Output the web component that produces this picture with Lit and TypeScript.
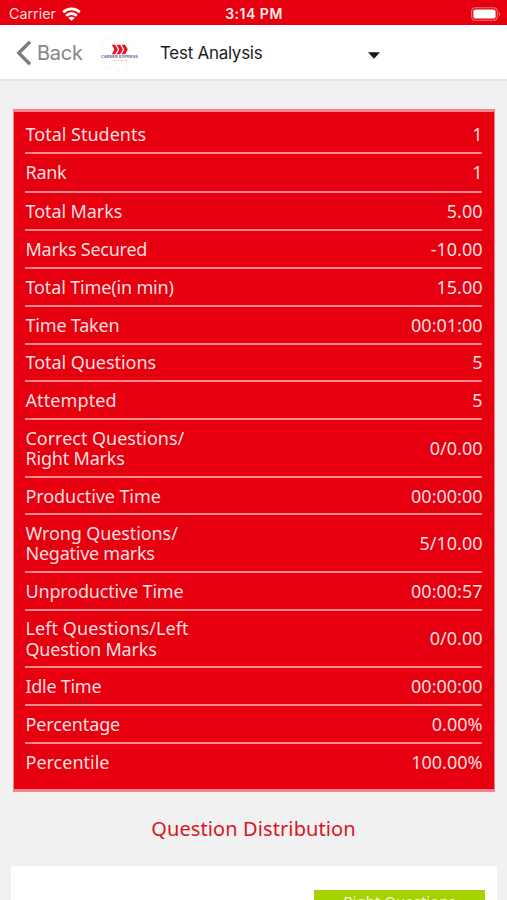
import { LitElement, html, svg, css } from "lit";
import { customElement } from "lit/decorators.js";

interface Line {
  text: string;
  tracking?: number;
}

interface Stat {
  lines: Line[];
  value: string;
}

const stat = (value: string, ...parts: [string, number?][]): Stat => ({
  value,
  lines: parts.map(([text, tracking]) => ({ text, tracking })),
});

const STATS: Stat[] = [
  stat("1", ["Total Students"]),
  stat("1", ["Rank", -0.3]),
  stat("5.00", ["Total Marks", -0.08]),
  stat("-10.00", ["Marks Secured", -0.25]),
  stat("15.00", ["Total Time(in min)", -0.15]),
  stat("00:01:00", ["Time Taken", -0.2]),
  stat("5", ["Total Questions", -0.05]),
  stat("5", ["Attempted", 0.1]),
  stat("0/0.00", ["Correct Questions/", -0.03], ["Right Marks", -0.2]),
  stat("00:00:00", ["Productive Time", -0.08]),
  stat("5/10.00", ["Wrong Questions/", -0.1], ["Negative marks", -0.25]),
  stat("00:00:57", ["Unproductive Time", -0.17]),
  stat("0/0.00", ["Left Questions/Left", 0.08], ["Question Marks", -0.2]),
  stat("00:00:00", ["Idle Time", -0.28]),
  stat("0.00%", ["Percentage", -0.12]),
  stat("100.00%", ["Percentile"]),
];

@customElement("status-bar")
export class StatusBar extends LitElement {
  static styles = css`
    :host {
      display: grid;
      grid-template-columns: 1fr auto 1fr;
      align-items: center;
      height: 25px;
      padding: 2px 6px 0 9px;
      box-sizing: border-box;
      background: #e6000f;
      color: #fff;
      font-family: Inter, sans-serif;
      line-height: 20px;
    }
    .carrier {
      display: flex;
      align-items: center;
      gap: 6px;
      font-size: 14.3px;
      color: #ffdcdc;
    }
    .clock {
      font-size: 14px;
      font-weight: 600;
      letter-spacing: 0.5px;
      margin-right: 2px;
      color: #ffeaea;
    }
    .battery {
      justify-self: end;
    }
    svg {
      display: block;
    }
  `;

  render() {
    return html`
      <div class="carrier">
        <span>Carrier</span>
        <svg width="19" height="14" viewBox="0 0 19 14">
          <g fill="none" stroke="#fff" stroke-width="2.7">
            <path d="M1.2 5.2C5.8 .8 13.2 .8 17.8 5.2" />
            <path d="M4.2 8.7c2.9-2.8 7.7-2.8 10.6 0" />
          </g>
          <path d="M9.5 13.8 6.3 10.9c1.7-1.6 4.7-1.6 6.4 0z" fill="#fff" />
        </svg>
      </div>
      <div class="clock">3:14 PM</div>
      <svg class="battery" width="30" height="14" viewBox="0 0 30 14">
        <rect x=".7" y=".7" width="25.6" height="12.6" rx="3.6" fill="none" stroke="#f2757a" stroke-width="1.1" />
        <rect x="2.4" y="2.4" width="22.2" height="9.2" rx="2.2" fill="#fff" />
        <path d="M27.8 4.8c1.8.7 1.8 3.7 0 4.4z" fill="#f2757a" />
      </svg>
    `;
  }
}

@customElement("nav-header")
export class NavHeader extends LitElement {
  static styles = css`
    :host {
      display: flex;
      align-items: center;
      height: 56px;
      box-sizing: border-box;
      padding: 1px 0 0 16px;
      background: #fff;
      border-bottom: 2px solid #e5e5e6;
      font-family: Inter, sans-serif;
    }
    svg {
      display: block;
      flex: none;
    }
    .back {
      width: 46px;
      margin: 0 0 0 5px;
      font-size: 20px;
      letter-spacing: -0.25px;
      color: #858585;
    }
    .logo {
      margin-left: 17px;
    }
    .title {
      width: 208px;
      margin: 1px 0 0 20px;
      font-size: 17px;
      letter-spacing: -0.28px;
      color: #1c1c1c;
    }
    .caret {
      margin-top: 6px;
    }
    .brand {
      font: bold 3.6px "Liberation Sans", sans-serif;
      fill: #6b69a0;
    }
    .tagline {
      font: 2.4px "Liberation Sans", sans-serif;
      fill: #ee5a60;
    }
  `;

  render() {
    const chevron = (x: number) =>
      svg`<path d="M${x} 11.8h3.4l2.8 4.7-2.8 4.7h-3.4l2.6-4.7z" fill="#e8131f" />`;
    return html`
      <svg width="16" height="26" viewBox="0 0 16 26">
        <path d="M14 1.8 2.8 13 14 24.2" fill="none" stroke="#7d7d7d" stroke-width="3.4" />
      </svg>
      <div class="back">Back</div>
      <svg class="logo" width="40" height="40" viewBox="0 0 40 40">
        <circle cx="19" cy="20" r="18" fill="none" stroke="#fafafa" stroke-width="3" stroke-dasharray="4 5" />
        ${[11.8, 16.7, 21.6].map(chevron)}
        <text class="brand" x="1" y="25" textLength="37" lengthAdjust="spacingAndGlyphs">CAREER EXPRESS</text>
        <text class="tagline" x="12" y="28.3" textLength="15" lengthAdjust="spacingAndGlyphs">FOR ALL EXAMS</text>
      </svg>
      <div class="title">Test Analysis</div>
      <svg class="caret" width="12" height="7" viewBox="0 0 12 7">
        <path d="M0 .3h12L6 6.8z" fill="#1b1b1b" />
      </svg>
    `;
  }
}

@customElement("stats-card")
export class StatsCard extends LitElement {
  static styles = css`
    :host {
      display: block;
      box-sizing: border-box;
      height: 682.5px;
      padding: 1px 12px 0 11px;
      background: #e6000f;
      border: solid #f5858a;
      border-width: 3px 1px;
      color: #ffdfdf;
      font: 18px/20.4px "Noto Sans", sans-serif;
    }
    .row {
      display: flex;
      align-items: center;
      justify-content: space-between;
      box-sizing: border-box;
      height: 37.84px;
      padding-top: 0.5px;
      border-bottom: 2px solid #f9898d;
    }
    .row.first {
      height: 41px;
      padding-top: 4px;
    }
    .row.second {
      height: 39.2px;
      padding-top: 0;
    }
    .row.double {
      height: 57.4px;
    }
    .row:last-child {
      border-bottom-color: transparent;
    }
    .line {
      display: block;
      white-space: nowrap;
    }
    .labels {
      margin-left: 0.5px;
    }
    .value {
      margin-right: -0.5px;
    }
  `;

  render() {
    return STATS.map(
      ({ lines, value }, i) => html`
        <div class="row ${i === 0 ? "first" : i === 1 ? "second" : ""} ${lines.length > 1 ? "double" : ""}">
          <div class="labels">
            ${lines.map(
              (l) => html`<span class="line" style="letter-spacing:${l.tracking ?? 0}px">${l.text}</span>`
            )}
          </div>
          <div class="value">${value}</div>
        </div>
      `
    );
  }
}

@customElement("app-root")
export class AppRoot extends LitElement {
  static styles = css`
    :host {
      display: flex;
      flex-direction: column;
      height: 900px;
      overflow: hidden;
      background: #f1f1f2;
    }
    status-bar,
    nav-header,
    stats-card,
    h2,
    .panel {
      flex: none;
    }
    stats-card {
      margin: 28px 12px 0 13px;
    }
    h2 {
      margin: 22.5px 0 0;
      font: 20px/30px "Noto Sans", sans-serif;
      letter-spacing: 0.1px;
      text-align: center;
      color: #d9151f;
    }
    .panel {
      display: flex;
      justify-content: flex-end;
      align-items: flex-start;
      height: 60px;
      margin: 22px 10px 0 10.5px;
      padding: 24px 12px 0 0;
      box-sizing: border-box;
      border-radius: 2px;
      background: #fff;
    }
    .legend {
      width: 171px;
      height: 30px;
      background: #a4d300;
      color: #f0f8d0;
      font: 15px/23px "Noto Sans", sans-serif;
      text-align: center;
    }
  `;

  render() {
    return html`
      <status-bar></status-bar>
      <nav-header></nav-header>
      <stats-card></stats-card>
      <h2>Question Distribution</h2>
      <div class="panel"><div class="legend">Right Questions</div></div>
    `;
  }
}
